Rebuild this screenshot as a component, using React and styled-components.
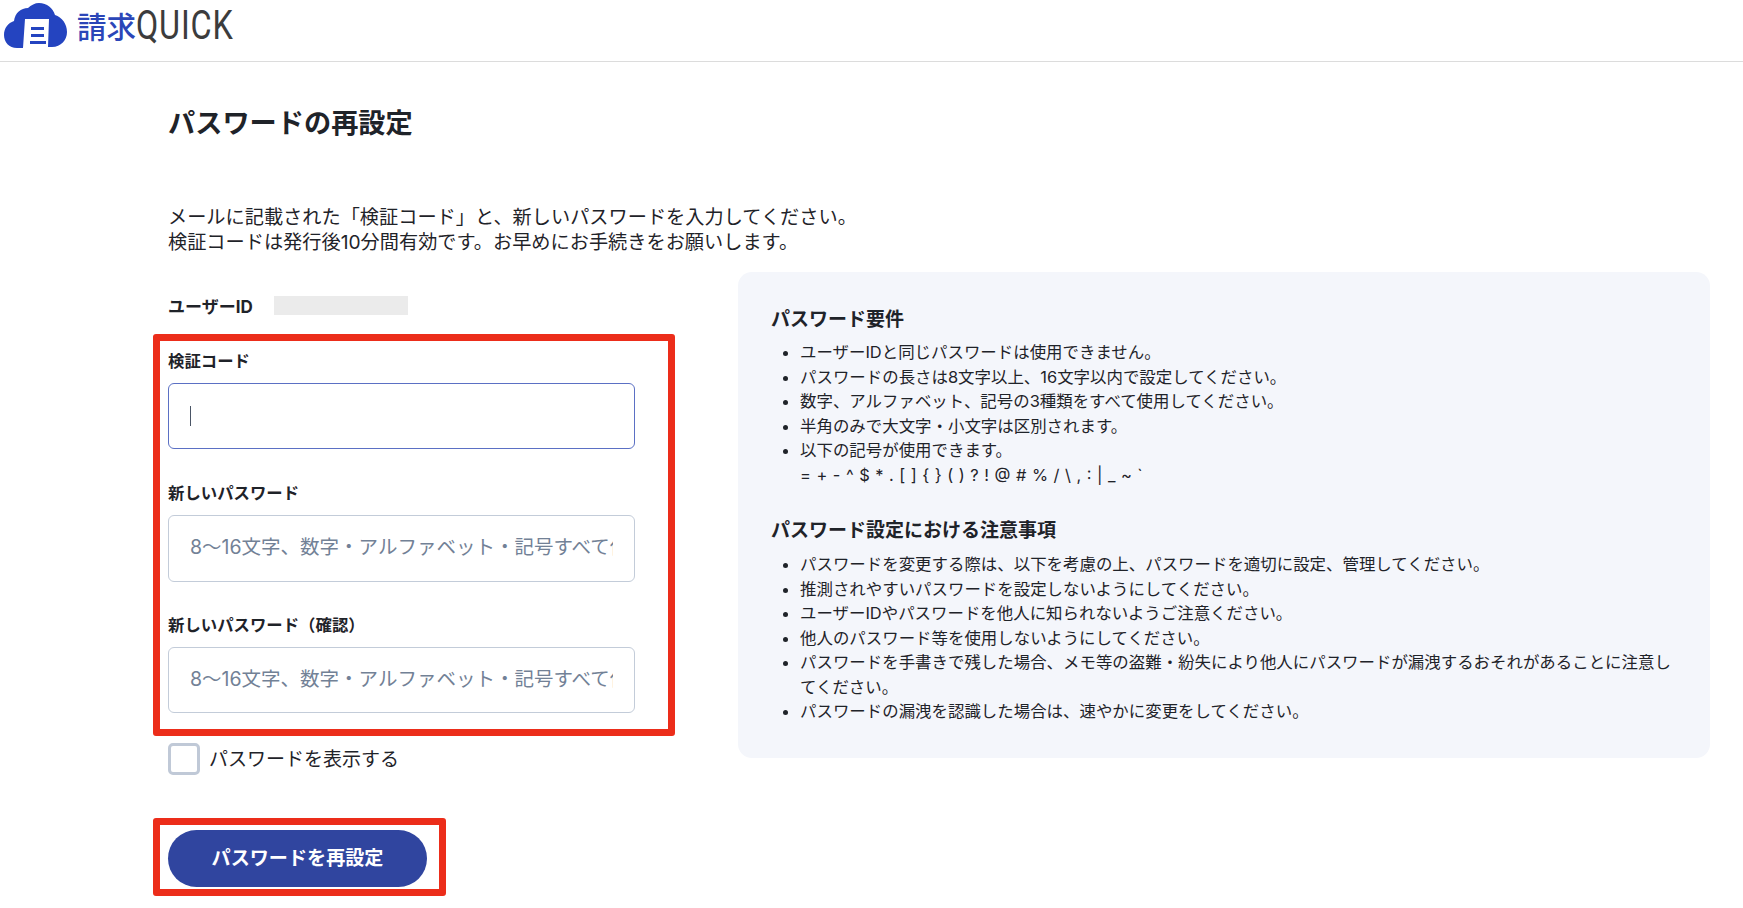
import React from 'react'
import styled, { createGlobalStyle } from 'styled-components'

const GlobalStyle = createGlobalStyle`
  html, body {
    margin: 0;
    padding: 0;
    background: #fff;
  }
  body {
    font-family: "Inter", "Noto Sans CJK JP", sans-serif;
    color: #1f2329;
  }
  * { box-sizing: border-box; }
`

const Header = styled.header`
  height: 62px;
  border-bottom: 1px solid #dcdcdc;
  display: flex;
  align-items: flex-start;
  padding: 3px 0 0 4px;
  overflow: hidden;
`
const LogoKanji = styled.span`
  margin: -1px 0 0 10px;
  font: 500 29.5px/46px "Noto Sans CJK JP", sans-serif;
  color: #2b46b8;
`
const LogoLatin = styled.span`
  display: inline-block;
  margin-top: 0;
  font: 400 40px/46px "Roboto", sans-serif;
  color: #3c3c3c;
  transform: scaleX(0.81);
  transform-origin: left center;
  letter-spacing: 1px;
`
const Main = styled.main`
  padding: 0 33px 0 168px;
`
const Title = styled.h1`
  margin: 44px 0 0;
  font-size: 27.2px;
  line-height: 36px;
  font-weight: 700;
`
const Intro = styled.p`
  margin: 63px 0 0;
  font-size: 19.2px;
  line-height: 24.5px;
`
const Columns = styled.div`
  display: flex;
  align-items: flex-start;
  margin-top: 18px;
`
const FormColumn = styled.div`
  width: 570px;
  flex: none;
  padding-top: 21px;
`
const UserRow = styled.div`
  display: flex;
  align-items: center;
  height: 24px;
  font-size: 17px;
  font-weight: 700;
`
const Label = styled.label`
  display: block;
  font-size: 16.4px;
  line-height: 24px;
  font-weight: 700;
  margin-top: ${p => p.$top || 0}px;
`
const Masked = styled.span`
  width: 134px;
  height: 19px;
  margin-left: 21px;
  background: #ebebeb;
`
const RedBox = styled.div`
  border: 7px solid #ec2d1a;
  border-radius: 3px;
  margin: ${p => p.$top}px 0 0 -15px;
  width: ${p => p.$width}px;
  padding: ${p => p.$pad};
`
const InputWrap = styled.div`
  position: relative;
  width: 467px;
  margin-top: 10px;
`
const Input = styled.input`
  display: block;
  width: 100%;
  height: ${p => p.$h}px;
  padding: 0 21px 3px 21px;
  border: 1px solid ${p => (p.$focused ? '#5b70c4' : '#c3ccd9')};
  border-radius: 6px;
  background: #fff;
  outline: none;
  font: 400 19.5px "Inter", "Noto Sans CJK JP", sans-serif;
  &::placeholder {
    color: #728196;
    opacity: 1;
  }
`
const Caret = styled.span`
  position: absolute;
  left: 22px;
  top: 23px;
  width: 1px;
  height: 20px;
  background: #4a5566;
`
const CheckRow = styled.label`
  display: flex;
  align-items: center;
  height: 32px;
  margin-top: 7px;
  font-size: 19px;
  line-height: 32px;
`
const CheckBox = styled.span`
  width: 32px;
  height: 32px;
  margin-right: 9px;
  background: #fff;
  border: 3px solid #c0c9d7;
  border-radius: 5px;
`
const CheckText = styled.span`
  padding-top: 2px;
`
const Button = styled.button`
  display: block;
  width: 259px;
  height: 57px;
  padding: 0 0 3px;
  border: none;
  border-radius: 29px;
  background: #30459f;
  color: #fff;
  font: 700 19.1px "Inter", "Noto Sans CJK JP", sans-serif;
`
const Panel = styled.aside`
  flex: 1;
  padding: 36px 31px 34px 33px;
  background: #f4f6fb;
  border-radius: 14px;
`
const PanelHeading = styled.h2`
  margin: ${p => p.$top || 0}px 0 0;
  font-size: 19px;
  line-height: 24px;
  font-weight: 700;
`
const List = styled.ul`
  margin: ${p => p.$top}px 0 0;
  padding: 0 0 0 29px;
  font-size: 16.45px;
  line-height: 24.5px;
`
const Symbols = styled.span`
  display: block;
  word-spacing: 0.9px;
`

const requirements = [
  'ユーザーIDと同じパスワードは使用できません。',
  'パスワードの長さは8文字以上、16文字以内で設定してください。',
  '数字、アルファベット、記号の3種類をすべて使用してください。',
  '半角のみで大文字・小文字は区別されます。',
]
const cautions = [
  'パスワードを変更する際は、以下を考慮の上、パスワードを適切に設定、管理してください。',
  '推測されやすいパスワードを設定しないようにしてください。',
  'ユーザーIDやパスワードを他人に知られないようご注意ください。',
  '他人のパスワード等を使用しないようにしてください。',
  'パスワードを手書きで残した場合、メモ等の盗難・紛失により他人にパスワードが漏洩するおそれがあることに注意してください。',
  'パスワードの漏洩を認識した場合は、速やかに変更をしてください。',
]
const placeholder = '8〜16文字、数字・アルファベット・記号すべて使用'

function Logo() {
  return (
    <svg width="63" height="45" viewBox="0 0 63 45" aria-hidden="true">
      <path fill="#2444c0" d="M13 45C5 45 0 39 0 32c0-7 4-12 10-14 1-8 7-13 14-13 3-3 7-5 11-5 8 0 14 5 16 12 7 2 12 9 12 17 0 8-6 15-15 15h-4L45 16H27L21 16 19 45z" />
      <rect x="27" y="24" width="13" height="3" fill="#2444c0" />
      <rect x="27" y="31" width="13" height="3" fill="#2444c0" />
      <rect x="26" y="38" width="16" height="3" fill="#2444c0" />
    </svg>
  )
}

export default function App() {
  return (
    <>
      <GlobalStyle />
      <Header>
        <Logo />
        <LogoKanji>請求</LogoKanji>
        <LogoLatin>QUICK</LogoLatin>
      </Header>
      <Main>
        <Title>パスワードの再設定</Title>
        <Intro>
          メールに記載された「検証コード」と、新しいパスワードを入力してください。
          <br />
          検証コードは発行後10分間有効です。お早めにお手続きをお願いします。
        </Intro>
        <Columns>
          <FormColumn>
            <UserRow>
              ユーザーID
              <Masked />
            </UserRow>
            <RedBox $top={17} $width={522} $pad="8px 0 16px 8px">
              <Label>検証コード</Label>
              <InputWrap>
                <Input $h={66} $focused />
                <Caret />
              </InputWrap>
              <Label $top={32}>新しいパスワード</Label>
              <InputWrap>
                <Input $h={67} placeholder={placeholder} />
              </InputWrap>
              <Label $top={31}>新しいパスワード（確認）</Label>
              <InputWrap>
                <Input $h={66} placeholder={placeholder} />
              </InputWrap>
            </RedBox>
            <CheckRow>
              <CheckBox />
              <CheckText>パスワードを表示する</CheckText>
            </CheckRow>
            <RedBox $top={43} $width={293} $pad="5px 0 2px 8px">
              <Button>パスワードを再設定</Button>
            </RedBox>
          </FormColumn>
          <Panel>
            <PanelHeading>パスワード要件</PanelHeading>
            <List $top={8}>
              {requirements.map(text => <li key={text}>{text}</li>)}
              <li>
                以下の記号が使用できます。
                <Symbols>{'= + - ^ $ * . [ ] { } ( ) ? ! @ # % / \\ , : | _ ~ `'}</Symbols>
              </li>
            </List>
            <PanelHeading $top={32}>パスワード設定における注意事項</PanelHeading>
            <List $top={9}>
              {cautions.map(text => <li key={text}>{text}</li>)}
            </List>
          </Panel>
        </Columns>
      </Main>
    </>
  )
}
